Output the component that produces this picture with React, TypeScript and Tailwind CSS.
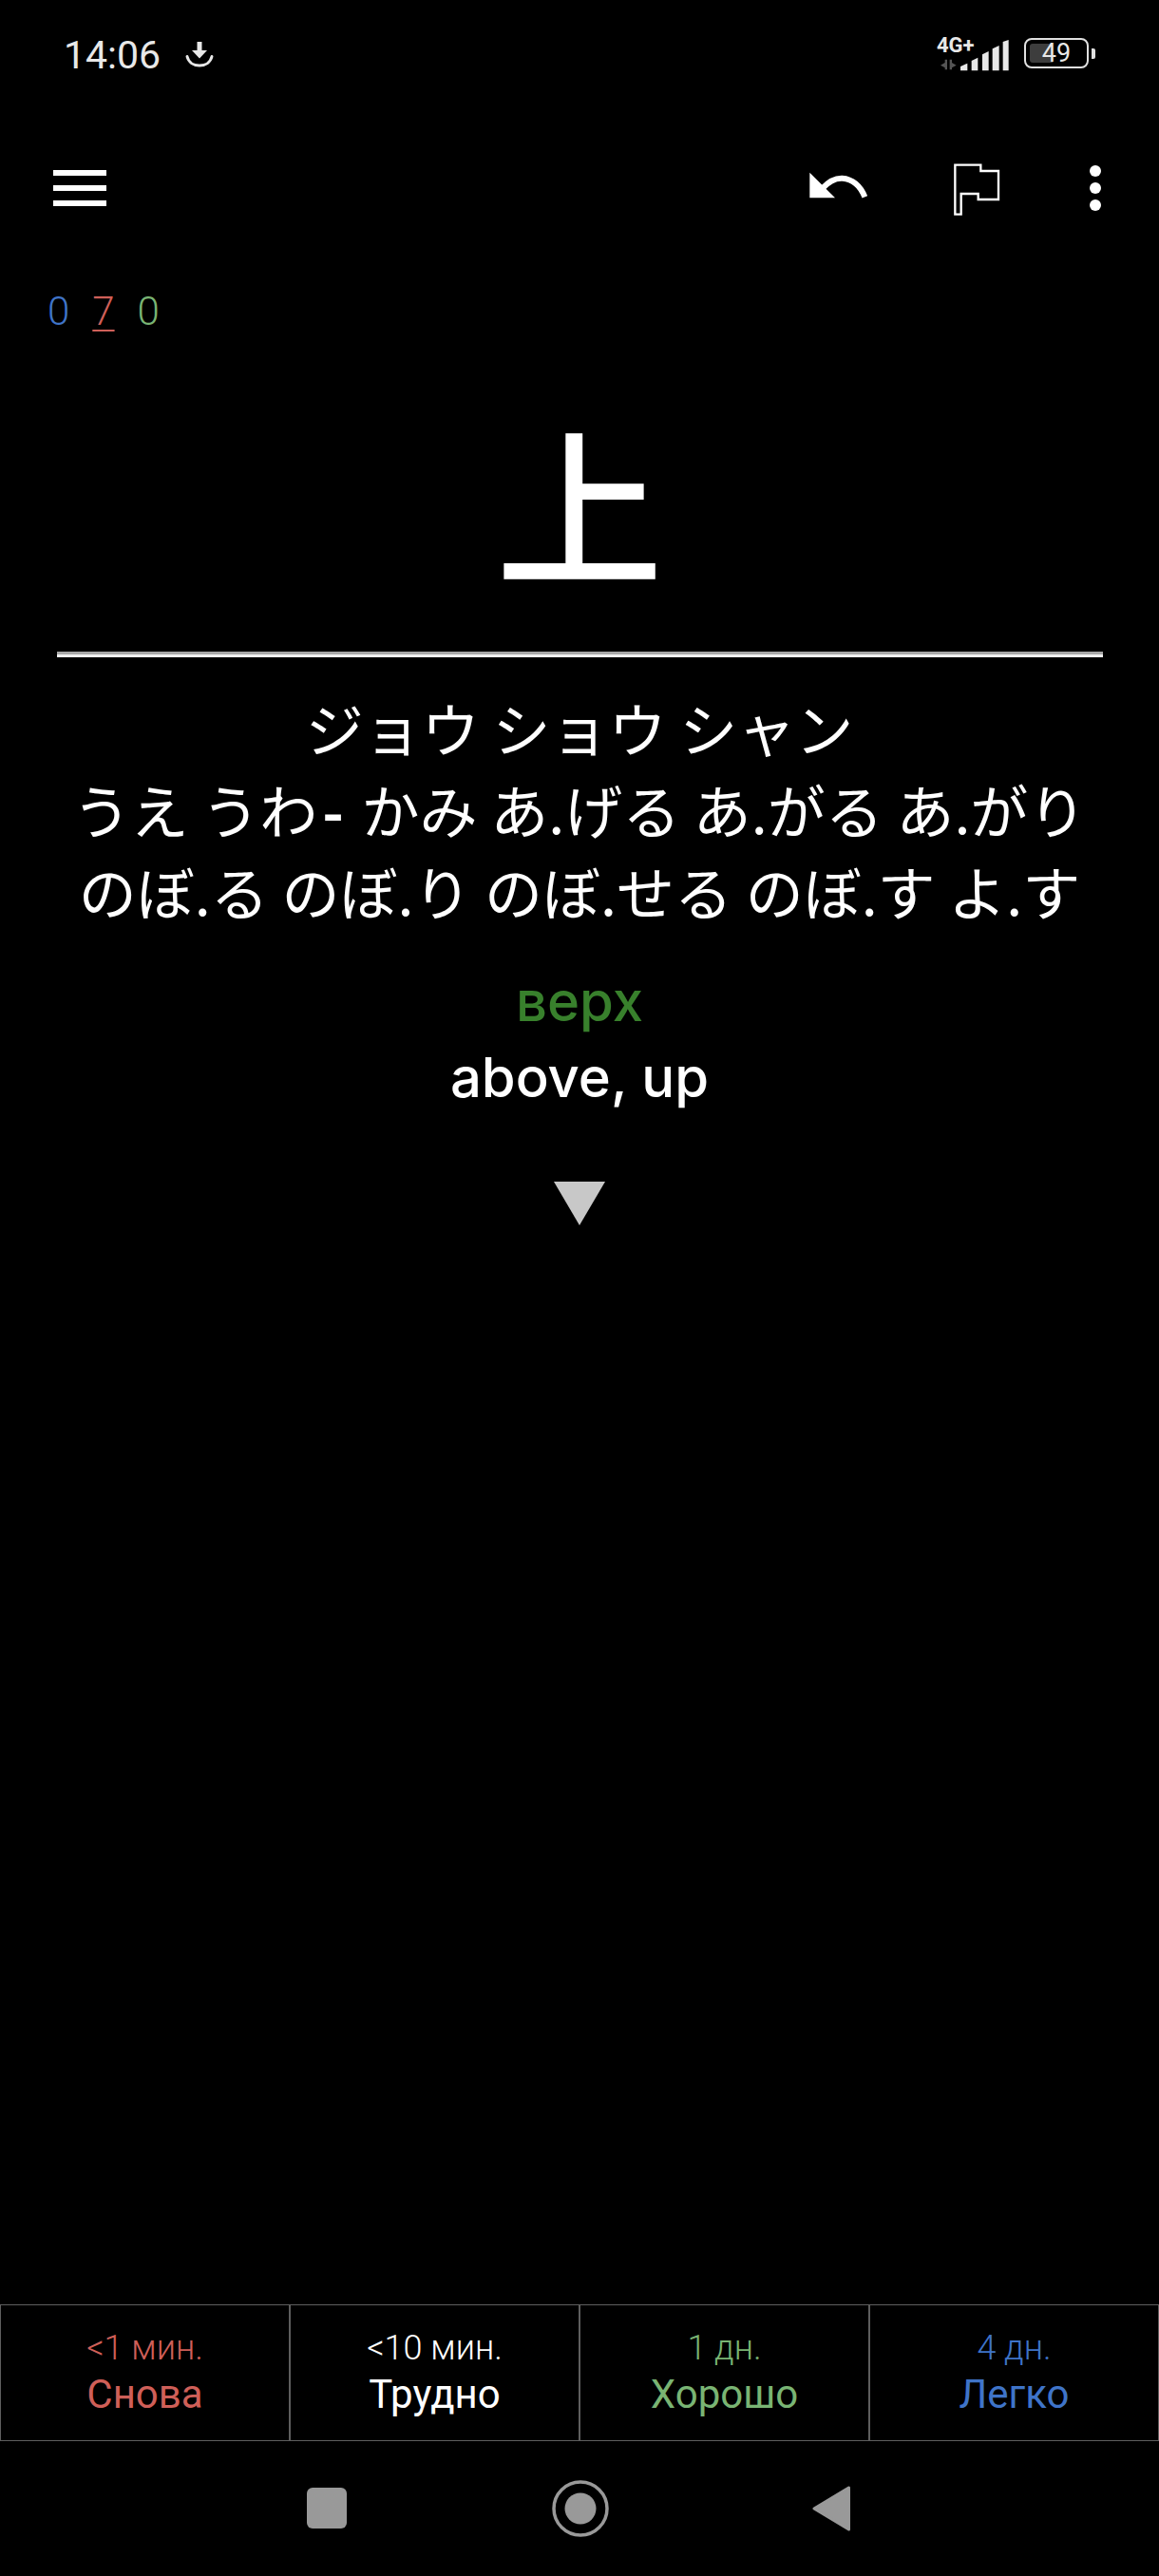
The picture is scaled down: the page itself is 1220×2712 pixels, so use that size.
import React from 'react';

const buttons = [
  { time: '<1 мин.', label: 'Снова', color: 'text-[#cf5f58]' },
  { time: '<10 мин.', label: 'Трудно', color: 'text-white' },
  { time: '1 дн.', label: 'Хорошо', color: 'text-[#79b473]' },
  { time: '4 дн.', label: 'Легко', color: 'text-[#3f74c8]' },
];

const StatusBar: React.FC = () => (
  <div className="h-[140px] shrink-0 flex items-start justify-between pt-[38px] pl-[67px] pr-[67px]">
    <div className="flex items-center h-[40px] gap-[26px]">
      <span className="font-['Roboto',sans-serif] text-[41px] leading-[40px] text-[#e8e8e8]">14:06</span>
      <svg width="30" height="28" viewBox="0 0 30 28" fill="none">
        <path d="M12.500 0h5v9h5.500L15 17.500 7 9h5.500z" fill="#e8e8e8" />
        <path d="M2 15.500C3.500 21.500 8.500 25 15 25s11.500-3.500 13-9.500" stroke="#e8e8e8" strokeWidth="3" strokeLinecap="round" />
      </svg>
    </div>
    <div className="flex items-start gap-[15px] mt-[2px]">
      <div className="relative w-[78px] h-[35px]">
        <span className="absolute left-[1px] top-[-3px] font-['Roboto',sans-serif] font-bold text-[22px] leading-[22px] text-[#e8e8e8]">4G+</span>
        <svg className="absolute left-0 top-0" width="78" height="35" viewBox="75 60 234 105">
          <path d="M90 146l14-8v-10h7v32h-7v-6zM119 128h7v10l14 8-14 8v6h-7z" fill="#555555" />
          <path
            d="M153 150l22-10v23h-22zM188 132l20-10v41h-20zM222 112l20-10v61h-20zM254 94l21-10v79h-21zM287 72l18-6v97h-18z"
            fill="#e8e8e8"
          />
        </svg>
      </div>
      <div className="flex items-center gap-[3px]">
        <div className="relative w-[68px] h-[32px] rounded-[8px] border-[2.500px] border-[#e0e0e0]">
          <div className="absolute left-[4px] top-[4px] bottom-[4px] w-[24px] rounded-l-[3px] bg-[#3d3d3d]" />
          <span className="absolute inset-0 flex items-center justify-center font-['Roboto',sans-serif] text-[27px] leading-[27px] text-[#e8e8e8]">49</span>
        </div>
        <div className="w-[4px] h-[11px] rounded-r-[2px] bg-[#e0e0e0]" />
      </div>
    </div>
  </div>
);

const Toolbar: React.FC = () => (
  <div className="h-[116px] shrink-0 flex items-center pl-[56px] pr-[60px]">
    <svg width="56" height="38" viewBox="0 0 56 38" fill="#ffffff">
      <rect x="0" y="0" width="56" height="6" />
      <rect x="0" y="16" width="56" height="6" />
      <rect x="0" y="32" width="56" height="6" />
    </svg>
    <svg className="ml-auto mt-[-6px]" width="65" height="30" viewBox="95 545 195 90" fill="none">
      <path d="M102 550v80h80z" fill="#ffffff" />
      <path d="M142 600C160 580 182 567 205 568C236 570 262 592 276 627" stroke="#ffffff" strokeWidth="18" />
    </svg>
    <svg className="ml-[87px] mt-[2px]" width="52" height="58" viewBox="550 510 156 174" fill="none">
      <path d="M560 521h81v19h56v90h-64v-18h-54v65h-19z" stroke="#ffffff" strokeWidth="7" />
    </svg>
    <svg className="ml-[92px]" width="14" height="50" viewBox="0 0 14 50" fill="#ffffff">
      <circle cx="7" cy="7" r="6" />
      <circle cx="7" cy="25" r="6" />
      <circle cx="7" cy="43" r="6" />
    </svg>
  </div>
);

const NavBar: React.FC = () => (
  <div className="h-[142px] shrink-0 flex items-center">
    <div className="ml-[323px] mb-[1px] w-[42px] h-[43px] rounded-[6px] bg-[#999999]" />
    <svg className="ml-[216px]" width="60" height="60" viewBox="0 0 60 60" fill="none">
      <circle cx="30" cy="30" r="28" stroke="#999999" strokeWidth="3.500" />
      <circle cx="30" cy="30" r="16.500" fill="#999999" />
    </svg>
    <svg className="ml-[214px]" width="40" height="48" viewBox="0 0 40 48" fill="#999999" stroke="#999999" strokeWidth="3" strokeLinejoin="round">
      <path d="M38.500 2v44L2 24z" />
    </svg>
  </div>
);

const App: React.FC = () => {
  return (
    <div className="w-[1220px] h-[2712px] bg-black flex flex-col text-white overflow-hidden">
      <StatusBar />
      <Toolbar />

      {/* Counts */}
      <div className="mt-[48px] pl-[50px] flex gap-[24px] font-['Roboto',sans-serif] font-light text-[42px] leading-[48px]">
        <span className="text-[#3f74c8]">0</span>
        <span className="text-[#cf5f58] underline decoration-[2px] underline-offset-[5px]">7</span>
        <span className="text-[#79b473]">0</span>
      </div>

      {/* Question */}
      <div className="mt-[70px] text-center font-['Noto_Sans_CJK_JP',sans-serif] font-medium text-[176px] leading-[210px]">上</div>
      <div className="mt-[54px] ml-[60px] mr-[59px] h-[6px] bg-[#f0f0f0] border-t-[3px] border-[#a8a8a8]" />

      {/* Readings */}
      <div className="mt-[31px] text-center font-['Noto_Sans_CJK_JP',sans-serif] text-[61px] leading-[86px]">
        <div className="whitespace-nowrap">ジョウ ショウ シャン</div>
        <div className="whitespace-nowrap">
          うえ うわ<span className="inline-block mx-[5px] font-bold">-</span> かみ あ.げる あ.がる あ.がり
        </div>
        <div className="whitespace-nowrap">のぼ.る のぼ.り のぼ.せる のぼ.す よ.す</div>
      </div>

      {/* Meanings */}
      <div className="mt-[33px] text-center font-['Inter',sans-serif] font-medium text-[58px] leading-[80px]">
        <div className="text-[#38802c]">верх</div>
        <div>above, up</div>
      </div>
      <svg className="mt-[70px] mx-auto" width="54" height="46" viewBox="0 0 54 46" fill="#c8c8c8">
        <path d="M0 0h54L27 46z" />
      </svg>

      {/* Answer buttons */}
      <div className="mt-auto h-[144px] shrink-0 grid grid-cols-4 border-y border-[#5e5e5e]">
        {buttons.map((b) => (
          <div key={b.label} className={`flex flex-col items-center justify-center border-x border-[#5e5e5e] font-['Roboto',sans-serif] ${b.color}`}>
            <span className="font-light text-[36px] leading-[46px]">{b.time}</span>
            <span className="text-[42px] leading-[52px]">{b.label}</span>
          </div>
        ))}
      </div>
      <NavBar />
    </div>
  );
};

export default App;
